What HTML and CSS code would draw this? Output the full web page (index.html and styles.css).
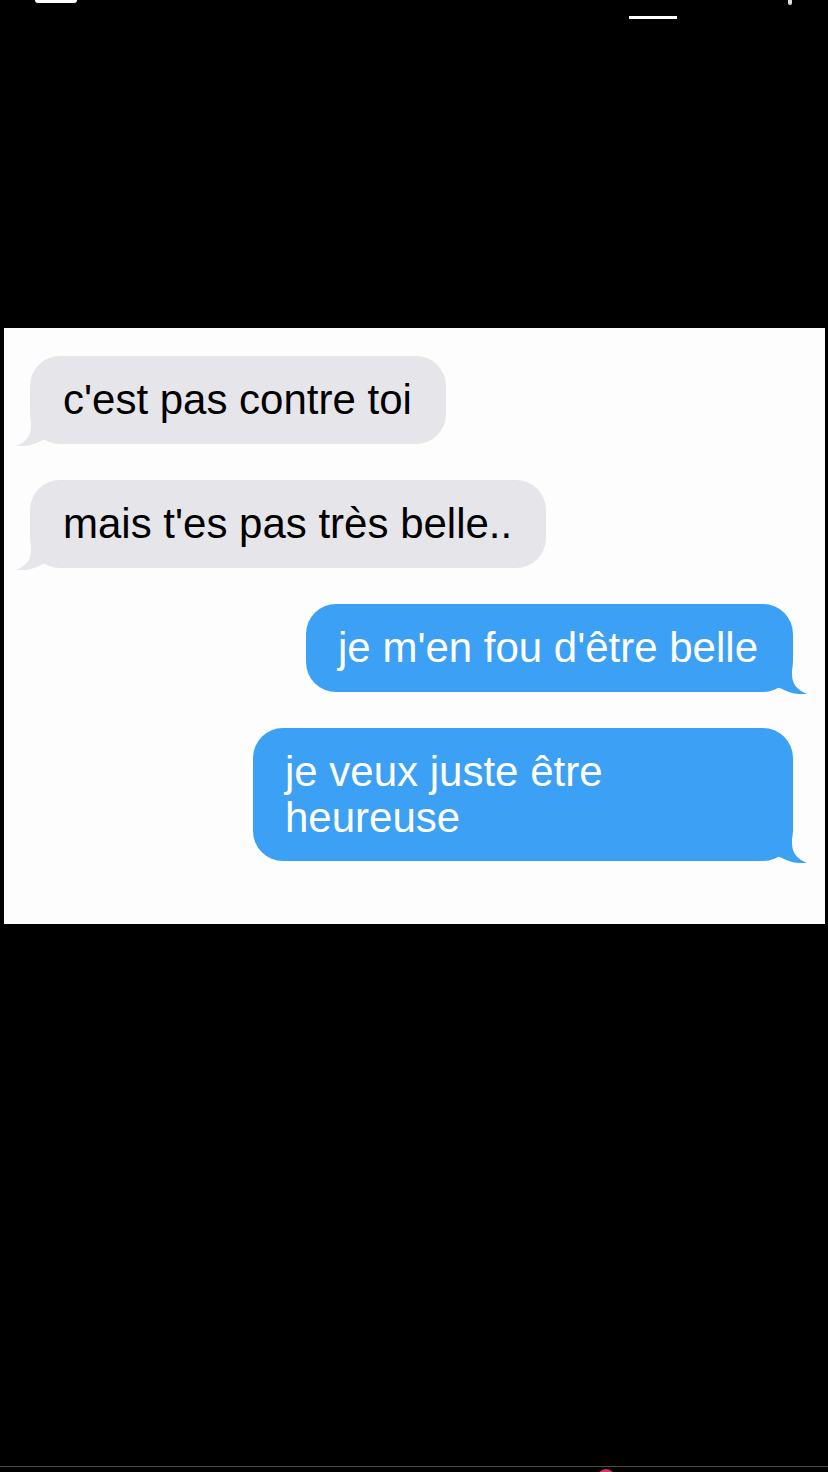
FILE: index.html
```html
<!DOCTYPE html>
<html lang="fr">
<head>
    <meta charset="UTF-8">
    <meta name="viewport" content="width=device-width, initial-scale=1.0">
    <title>Messages</title>
    <link rel="stylesheet" href="styles.css">
</head>
<body>

<div class="top-bar">
    <span class="chip"></span>
    <span class="tab-line"></span>
    <span class="dot"></span>
</div>

<div class="chat">
    <div class="bubble received">
        c'est pas contre toi
        <svg class="tail" width="34" height="36" viewBox="0 0 34 36"><path d="M15 0 L15 16 C15 26 10 32 0 36 C12 37 20 34 27 30 L34 29 L34 0 Z"/></svg>
    </div>
    <div class="bubble received">
        mais t'es pas très belle..
        <svg class="tail" width="34" height="36" viewBox="0 0 34 36"><path d="M15 0 L15 16 C15 26 10 32 0 36 C12 37 20 34 27 30 L34 29 L34 0 Z"/></svg>
    </div>
    <div class="bubble sent">
        je m'en fou d'être belle
        <svg class="tail" width="34" height="36" viewBox="0 0 34 36"><path d="M15 0 L15 16 C15 26 10 32 0 36 C12 37 20 34 27 30 L34 29 L34 0 Z"/></svg>
    </div>
    <div class="bubble sent wide">
        je veux juste être heureuse
        <svg class="tail" width="34" height="36" viewBox="0 0 34 36"><path d="M15 0 L15 16 C15 26 10 32 0 36 C12 37 20 34 27 30 L34 29 L34 0 Z"/></svg>
    </div>
</div>

<div class="bottom">
    <div class="bottom-line"></div>
    <div class="bottom-bar">
        <span class="rec"></span>
    </div>
</div>

</body>
</html>
```

FILE: styles.css
```css
html, body {
    margin: 0;
    padding: 0;
    background-color: #000;
}
body {
    width: 828px;
    height: 1472px;
    overflow: hidden;
    font-family: 'Liberation Sans', Arial, Helvetica, sans-serif;
}
.top-bar {
    height: 328px;
    display: flex;
    align-items: flex-start;
}
.chip {
    margin-left: 35px;
    width: 42px;
    height: 3px;
    background-color: #fff;
    border-radius: 0 0 4px 4px;
}
.tab-line {
    margin-left: 552px;
    margin-top: 16px;
    width: 48px;
    height: 3px;
    background-color: #fff;
}
.dot {
    margin-left: 111px;
    width: 4px;
    height: 5px;
    background-color: #ddd;
    border-radius: 0 0 2px 2px;
}
.chat {
    margin-left: 4px;
    width: 821px;
    height: 596px;
    box-sizing: border-box;
    background-color: #fdfdfd;
    padding: 28px 32px 0 26px;
    display: flex;
    flex-direction: column;
    gap: 36px;
}
.bubble {
    position: relative;
    box-sizing: border-box;
    max-width: 540px;
    font-size: 42px;
    line-height: 46px;
    padding: 21px 34px 21px 33px;
    border-radius: 30px;
}
.bubble .tail {
    position: absolute;
    bottom: -2px;
}
.received {
    align-self: flex-start;
    background-color: #e6e5ea;
    color: #000;
}
.received .tail {
    left: -14px;
    fill: #e6e5ea;
}
.sent {
    align-self: flex-end;
    background-color: #3ca1f4;
    color: #fff;
    padding-left: 32px;
    padding-right: 35px;
}
.sent .tail {
    right: -14px;
    fill: #3ca1f4;
    transform: scaleX(-1);
}
.wide {
    width: 540px;
    padding-bottom: 20px;
}
.bottom {
    height: 548px;
    display: flex;
    flex-direction: column;
    justify-content: flex-end;
}
.bottom-line {
    height: 1px;
    background-color: #4a4a4a;
}
.bottom-bar {
    height: 5px;
    overflow: hidden;
}
.rec {
    display: block;
    margin-left: 597px;
    margin-top: 2px;
    width: 18px;
    height: 18px;
    border-radius: 50%;
    background-color: #e0306a;
}
```
